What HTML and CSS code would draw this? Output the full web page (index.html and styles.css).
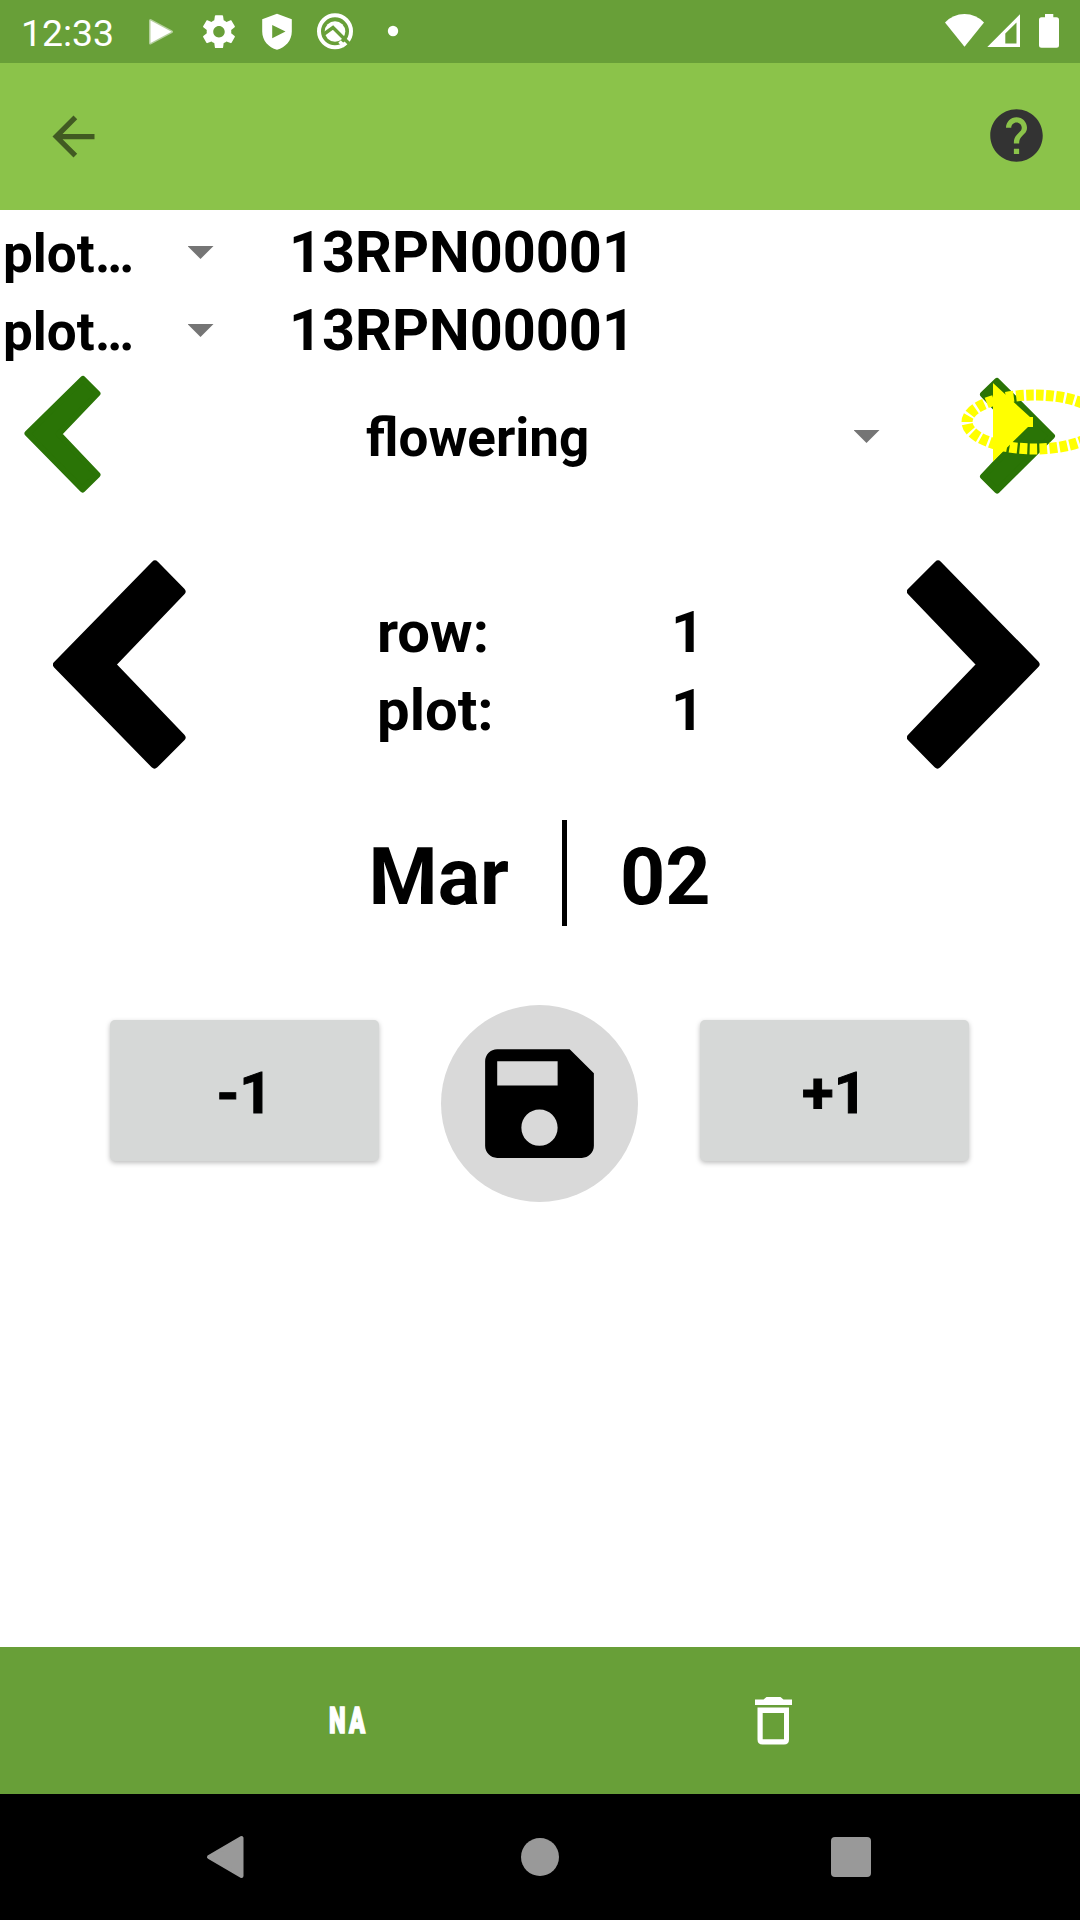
FILE: index.html
```html
<!DOCTYPE html>
<html lang="en">
<head>
<meta charset="utf-8">
<title>Collect</title>
<link rel="stylesheet" href="styles.css">
</head>
<body>
<header class="status-bar">
  <span class="clock">12:33</span>
  <svg class="notifications" viewBox="140 0 270 63" width="270" height="63" fill="#fff">
    <path d="M150.500 20.500L171.500 31.700L150.500 43z" stroke="#fff" stroke-opacity=".5" stroke-width="3" stroke-linejoin="round"/>
    <path transform="translate(199.300 12) scale(1.640)" d="M19.430 12.980c.04-.32.07-.64.07-.98s-.03-.66-.07-.98l2.110-1.650c.19-.15.24-.42.12-.64l-2-3.460c-.12-.22-.39-.3-.61-.22l-2.490 1c-.52-.4-1.080-.73-1.690-.98l-.38-2.650C14.460 2.180 14.250 2 14 2h-4c-.25 0-.46.18-.49.42l-.38 2.650c-.61.25-1.170.59-1.690.98l-2.490-1c-.23-.09-.49 0-.61.22l-2 3.460c-.13.22-.07.49.12.64l2.110 1.650c-.04.32-.07.65-.07.98s.03.66.07.98l-2.110 1.650c-.19.15-.24.42-.12.64l2 3.460c.12.22.39.3.61.22l2.490-1c.52.4 1.080.73 1.690.98l.38 2.650c.03.24.24.42.49.42h4c.25 0 .46-.18.49-.42l.38-2.650c.61-.25 1.170-.59 1.690-.98l2.490 1c.23.09.49 0 .61-.22l2-3.460c.12-.22.07-.49-.12-.64l-2.110-1.650zM12 15.500c-1.930 0-3.500-1.570-3.500-3.500s1.570-3.500 3.500-3.500 3.500 1.570 3.500 3.500-1.570 3.500-3.500 3.500z"/>
    <path fill-rule="evenodd" d="M277 13.700L291.800 19.300V31.500C291.800 40.500 285.500 47.500 277 49.800C268.500 47.500 262.200 40.500 262.200 31.500V19.300zM272.200 25V38.200L285.500 31.600z"/>
    <circle cx="335" cy="31.300" r="16" fill="none" stroke="#fff" stroke-width="4"/>
    <circle cx="335" cy="31.500" r="10.300"/>
    <path d="M324 34L333 27.500L351 45.500" fill="none" stroke="#689f38" stroke-width="3.400"/>
    <path d="M339.500 41.500L344.500 46.200" fill="none" stroke="#fff" stroke-width="3.500"/>
    <circle cx="393" cy="31" r="5.200"/>
  </svg>
  <svg class="system-icons" viewBox="940 0 125 63" width="125" height="63" fill="#fff">
    <path d="M945 22.500Q953 14 964.500 14T984 22.500L964.500 46.700z"/>
    <path fill-rule="evenodd" d="M987.300 47L1020 14.300V47zM1005.300 33.500V43.500H1016.500V22.500z"/>
    <path d="M1045 14h8.300v3.300h3.200q2.500 0 2.500 2.500v25.500q0 2.500-2.500 2.500h-15q-2.500 0-2.500-2.500v-25.500q0-2.500 2.500-2.500h3.500z"/>
  </svg>
</header>

<nav class="app-bar">
  <svg class="back" viewBox="0 0 24 24" width="63" height="63" fill="#415a22"><path d="M20 11H7.830l5.590-5.590L12 4l-8 8 8 8 1.410-1.410L7.830 13H20v-2z"/></svg>
  <svg viewBox="0 0 24 24" width="63" height="63" fill="#333"><path d="M12 2C6.480 2 2 6.480 2 12s4.480 10 10 10 10-4.480 10-10S17.520 2 12 2zm1 17h-2v-2h2v2zm2.070-7.750l-.9.920C13.450 12.900 13 13.500 13 15h-2v-.5c0-1.100.45-2.100 1.170-2.830l1.240-1.260c.37-.36.59-.86.59-1.410 0-1.100-.9-2-2-2s-2 .9-2 2H8c0-2.210 1.790-4 4-4s4 1.790 4 4c0 .88-.36 1.680-.93 2.250z"/></svg>
</nav>

<main class="collect">
  <section class="prefixes">
    <div class="prefix-row">
      <span class="prefix-name">plot…</span><i class="caret"></i><span class="prefix-value">13RPN00001</span>
    </div>
    <div class="prefix-row">
      <span class="prefix-name">plot…</span><i class="caret"></i><span class="prefix-value">13RPN00001</span>
    </div>
  </section>

  <section class="trait-row">
    <svg viewBox="24 375 78 120" width="78" height="120" fill="#2a7406" stroke="#2a7406" stroke-width="6" stroke-linejoin="round"><path d="M27.500 433.500L83 379L97.500 393.500L58.800 434L97.500 474.800L82.500 489.500z"/></svg>
    <span class="trait-name">flowering</span>
    <i class="caret"></i>
    <svg viewBox="979 375 78 120" width="78" height="120" fill="#2a7406" stroke="#2a7406" stroke-width="6" stroke-linejoin="round"><path d="M1052 436L997 381L983 394.500L1021.500 435.500L983 476.500L997 490.500z"/></svg>
    <svg class="swipe-marker" viewBox="950 369 130 131" width="130" height="131">
      <path d="M967 422A67.500 27 0 0 1 1102 422A67.500 27 0 0 1 967 422z" fill="none" stroke="#ff0" stroke-width="11" stroke-dasharray="7.700 2.350" stroke-dashoffset="1.300"/>
      <path d="M993 383L1030 417H1033V427H1028L993 461.500z" fill="#ff0"/>
    </svg>
  </section>

  <section class="range-row">
    <svg viewBox="53 560 133 209" width="133" height="209" stroke="#000" stroke-width="8" stroke-linejoin="round"><path d="M57 664.700L155 564.500L181.500 591.500L111.500 664.500L181.500 737.500L154.500 764.500z"/></svg>
    <dl class="position">
      <dt>row:</dt><dd>1</dd>
      <dt>plot:</dt><dd>1</dd>
    </dl>
    <svg viewBox="907 560 133 209" width="133" height="209" stroke="#000" stroke-width="8" stroke-linejoin="round"><path d="M1035.500 664.300L938 564.500L911 591.500L981 664.500L911 737.500L937.500 764.500z"/></svg>
  </section>

  <section class="date-row">
    <span class="month">Mar</span><i class="divider"></i><span class="day">02</span>
  </section>

  <section class="actions">
    <button class="step">-1</button>
    <button class="save" aria-label="Save">
      <svg viewBox="0 0 24 24" width="145" height="145"><path d="M17 3H5c-1.110 0-2 .9-2 2v14c0 1.100.89 2 2 2h14c1.100 0 2-.9 2-2V7l-4-4zm-5 16c-1.660 0-3-1.340-3-3s1.340-3 3-3 3 1.340 3 3-1.340 3-3 3zm3-10H5V5h10v4z"/></svg>
    </button>
    <button class="step">+1</button>
  </section>
</main>

<footer class="toolbar">
  <span class="na">NA</span>
  <svg viewBox="754 1695 39 51" width="39" height="51" fill="#fff">
    <path d="M755 1699.500h8.500l3-2.500h14l3 2.500h8.500v5.500h-37z"/>
    <path fill-rule="evenodd" d="M757.500 1707.500H789V1739.500Q789 1744.500 784 1744.500H762.500Q757.500 1744.500 757.500 1739.500zM762.700 1713V1739.200H784V1713z"/>
  </svg>
</footer>

<nav class="system-nav">
  <svg viewBox="200 1830 50 54" width="50" height="54" fill="#999" stroke="#999" stroke-width="4" stroke-linejoin="round"><path d="M209 1857L241.500 1838V1876z"/></svg>
  <i class="home"></i>
  <i class="recents"></i>
</nav>
</body>
</html>
```
FILE: styles.css
```css
* { box-sizing: border-box; }

body {
  margin: 0;
  width: 1080px;
  height: 1920px;
  display: flex;
  flex-direction: column;
  overflow: hidden;
  background: #fff;
  color: #000;
  font-family: Roboto, "Liberation Sans", sans-serif;
}

svg { display: block; flex: none; }

.status-bar {
  height: 63px;
  flex: none;
  display: flex;
  background: #689f38;
  color: #fff;
}
.clock {
  width: 140px;
  padding-left: 21px;
  font-size: 37.400px;
  line-height: 66px;
}
.system-icons { margin-left: auto; margin-right: 15px; }

.app-bar {
  height: 147px;
  flex: none;
  display: flex;
  align-items: center;
  justify-content: space-between;
  padding: 0 32px 2px 42px;
  background: #8bc34a;
}
.back { margin-top: 2px; }

.collect {
  flex: 1;
  padding-top: 3px;
  font-weight: 700;
}

.caret {
  flex: none;
  width: 26px;
  height: 13px;
  background: #757575;
  clip-path: polygon(0 0, 100% 0, 50% 100%);
}

.prefix-row {
  display: flex;
  height: 78px;
  line-height: 78px;
}
.prefix-name { width: 187.500px; padding: 2px 0 0 3px; font-size: 53px; }
.prefix-row .caret { margin-top: 33px; }
.prefix-value { margin-left: 75.500px; padding-top: 1px; font-size: 57.600px; }

.trait-row {
  position: relative;
  display: flex;
  height: 131px;
  padding: 6px 23px 0 24px;
}
.trait-name {
  width: 487.500px;
  margin-left: 264px;
  font-size: 53px;
  line-height: 126px;
}
.trait-row .caret { margin: 55px 99.500px 0 0; }
.swipe-marker { position: absolute; top: 0; right: 0; }

.range-row {
  display: flex;
  padding: 60px 40px 0 53px;
}
.position {
  width: 530px;
  margin: 33px 0 0 191px;
  display: grid;
  grid-template-columns: 294px auto;
  grid-auto-rows: 78px;
  font-size: 58px;
  line-height: 78px;
}
.position dd { margin: 0; }

.date-row {
  display: flex;
  margin-top: 51px;
  height: 106px;
  font-size: 79px;
  line-height: 114px;
}
.month { width: 562px; padding-left: 368.500px; }
.divider { width: 5px; background: #000; }
.day { margin-left: 53px; }

.actions {
  display: flex;
  margin-top: 79px;
  padding: 0 111px 0 110px;
  justify-content: space-between;
}
.step, .save {
  border: 0;
  padding: 0;
  color: #000;
  font: 700 58px/142px Roboto, "Liberation Sans", sans-serif;
}
.step {
  width: 269px;
  height: 141px;
  padding-top: 2px;
  margin-top: 15px;
  border-radius: 5px;
  background: #d6d8d7;
  box-shadow: 0 2px 5px rgba(0, 0, 0, .26);
  -webkit-text-stroke: 1px #000;
}
.save {
  width: 197px;
  height: 197px;
  display: flex;
  align-items: center;
  justify-content: center;
  border-radius: 50%;
  background: #d9d9d9;
}

.toolbar {
  height: 147px;
  flex: none;
  display: flex;
  align-items: center;
  padding-left: 328.500px;
  background: #689f38;
}
.na {
  width: 425.500px;
  color: #fff;
  font-size: 37px;
  font-weight: 900;
  letter-spacing: 5px;
  -webkit-text-stroke: 1.600px #fff;
  transform: scaleX(.64);
  transform-origin: left;
}

.system-nav {
  height: 126px;
  flex: none;
  display: flex;
  align-items: center;
  padding-left: 200px;
  background: #000;
}
.home, .recents { background: #999; }
.home { width: 38px; height: 38px; margin-left: 271px; border-radius: 50%; }
.recents { width: 40px; height: 40px; margin-left: 272px; border-radius: 4px; }
```
